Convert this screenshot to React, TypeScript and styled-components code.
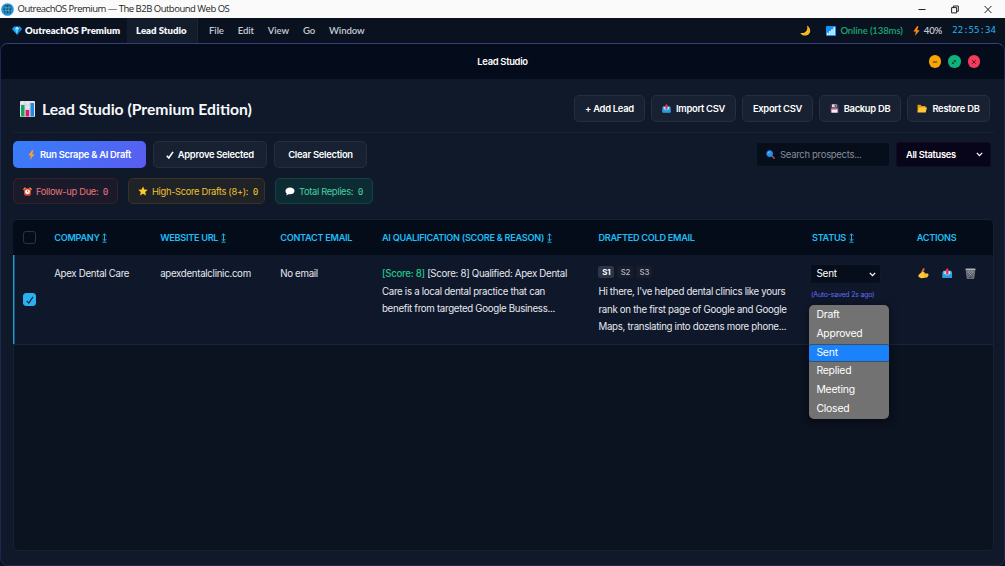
import React from "react";
import styled, { createGlobalStyle, css } from "styled-components";

const Global = createGlobalStyle`
  * { box-sizing: border-box; }
  html, body { margin: 0; padding: 0; background: #0b1220; }
  body {
    font-family: Inter, "Liberation Sans", sans-serif;
    letter-spacing: -0.3px;
    color: #e8edf5;
    overflow: hidden;
  }
  svg { display: block; flex: none; }
`;

const Screen = styled.div`
  width: 1005px;
  height: 566px;
  display: flex;
  flex-direction: column;
  background: #0a1220;
`;

const display = css`
  font-family: Lato, Inter, sans-serif;
`;

const Label = styled.span`
  white-space: nowrap;
`;

/* ---------- host title bar ---------- */
const HostBar = styled.header`
  height: 18px;
  flex: none;
  display: flex;
  align-items: center;
  background: #fafafa;
  color: #1c1c1c;
  padding: 0 13px 0 1px;
  font: 9.5px/18px "Open Sans", "Noto Sans", sans-serif;
  letter-spacing: -0.5px;
`;
const HostTitle = styled.span`
  margin-left: 3.5px;
  flex: 1;
`;
const HostControls = styled.div`
  display: flex;
  align-items: center;
  gap: 25px;
`;

/* ---------- menu bar ---------- */
const MenuBar = styled.nav`
  height: 25px;
  flex: none;
  display: flex;
  align-items: stretch;
  background: #0a1220;
  font-size: 9.6px;
  line-height: 25px;
  letter-spacing: 0;
  ${display}
`;
const Brand = styled.div`
  width: 127px;
  padding-left: 12px;
  display: flex;
  align-items: center;
  gap: 3px;
  font-weight: 800;
  color: #f4f7fb;
`;
const ActiveApp = styled.div`
  width: 71px;
  padding-left: 9px;
  background: #121c2b;
  border-right: 1px solid #1a2433;
  font-weight: 800;
  color: #f4f7fb;
`;
const MenuItems = styled.div`
  flex: 1;
  display: flex;
  padding-left: 11px;
  gap: 13.8px;
  font-weight: 600;
  letter-spacing: -0.08px;
  color: #c3cad6;
`;
const Tray = styled.div`
  display: flex;
  align-items: center;
  padding-right: 9px;
`;
const TrayItem = styled.div<{ $color: string; $gap: number }>`
  display: flex;
  align-items: center;
  gap: 4px;
  color: ${(p) => p.$color};
  margin-left: ${(p) => p.$gap}px;
  font-weight: 600;
  letter-spacing: -0.15px;
`;
const Clock = styled.div`
  margin-left: 10px;
  color: #25b3ec;
  font: 400 9.1px/25px "DejaVu Sans Mono", monospace;
`;

/* ---------- app window ---------- */
const Window = styled.main`
  flex: 1;
  min-height: 0;
  display: flex;
  flex-direction: column;
  border: 1px solid #1b2850;
  border-top-color: #353f7c;
  border-radius: 8px;
  background: #0f1929;
  overflow: hidden;
`;
const WindowBar = styled.div`
  height: 35px;
  flex: none;
  display: grid;
  grid-template-columns: 1fr auto 1fr;
  align-items: center;
  background: #040c1b;
  font-size: 9.4px;
  font-weight: 600;
  color: #fff;
`;
const WindowDots = styled.div`
  grid-column: 3;
  justify-self: end;
  display: flex;
  gap: 7px;
  padding-right: 24px;
`;
const Dot = styled.span<{ $c: string }>`
  width: 12.5px;
  height: 12.5px;
  border-radius: 50%;
  background: ${(p) => p.$c};
  display: grid;
  place-items: center;
`;
const Content = styled.div`
  flex: 1;
  min-height: 0;
  display: flex;
  flex-direction: column;
  padding: 16px 10px 14px 12px;
`;
const PageHead = styled.div`
  display: flex;
  height: 38px;
  align-items: flex-start;
  justify-content: space-between;
  border-bottom: 1px solid #172130;
  padding: 0 4px 0 7px;
`;
const PageTitle = styled.h1`
  margin: 0;
  display: flex;
  align-items: center;
  gap: 7px;
  height: 28px;
  font-size: 15.7px;
  line-height: 26px;
  letter-spacing: 0;
  font-weight: 700;
  color: #f6f8fb;
  ${display}
`;
const ButtonRow = styled.div<{ $gap?: number }>`
  display: flex;
  align-items: center;
  gap: ${(p) => p.$gap ?? 6}px;
`;
const Button = styled.button<{ $w: number; $primary?: boolean; $gap?: number }>`
  width: ${(p) => p.$w}px;
  height: 27px;
  padding: 0;
  display: flex;
  align-items: center;
  justify-content: center;
  gap: ${(p) => p.$gap ?? 5}px;
  border-radius: 5px;
  border: 1px solid ${(p) => (p.$primary ? "transparent" : "#232e3e")};
  background: ${(p) => (p.$primary ? "linear-gradient(135deg,#367ffa,#5a5cf0) border-box" : "#172131")};
  color: #fff;
  font: 600 9.4px/1 Inter, sans-serif;
  letter-spacing: -0.28px;
`;
const Toolbar = styled.div`
  display: flex;
  justify-content: space-between;
  align-items: center;
  margin-top: 8px;
  height: 27px;
  padding-right: 3px;
`;
const Search = styled.div`
  width: 134px;
  height: 25px;
  display: flex;
  align-items: center;
  gap: 5px;
  padding-left: 9px;
  border: 1px solid #101a28;
  border-radius: 3px;
  background: #060e1c;
  color: #868c96;
  font-size: 9.5px;
`;
const Filter = styled.div`
  width: 95px;
  height: 25px;
  display: flex;
  align-items: center;
  justify-content: space-between;
  padding: 0 7px 0 9px;
  border: 1px solid #0d0d20;
  border-radius: 3px;
  background: #080419;
  color: #fff;
  font-size: 9.3px;
  font-weight: 600;
`;
const Stats = styled.div`
  display: flex;
  gap: 10px;
  margin-top: 10px;
`;
const Stat = styled.div<{ $w: number; $fg: string; $bg: string; $bd: string }>`
  width: ${(p) => p.$w}px;
  height: 26px;
  display: flex;
  align-items: center;
  padding-left: 9px;
  gap: 4px;
  border: 1px solid ${(p) => p.$bd};
  border-radius: 5px;
  background: ${(p) => p.$bg};
  color: ${(p) => p.$fg};
  font-size: 9.35px;
  letter-spacing: -0.33px;
`;
const Count = styled.span`
  margin-left: 0.5px;
  font: 9.4px "DejaVu Sans Mono", monospace;
`;

/* ---------- table ---------- */
const Table = styled.section`
  flex: 1;
  min-height: 0;
  margin-top: 15px;
  display: flex;
  flex-direction: column;
  border: 1px solid #162030;
  border-radius: 5px;
  background: #0b1220;
`;
const columns = css`
  display: grid;
  grid-template-columns: 41.2px 106px 120px 101.8px 216.5px 213.5px 104.8px 1fr;
  margin-left: -1px;
`;
const HeadRow = styled.div`
  ${columns}
  height: 35px;
  align-items: center;
  background: #040c1a;
  border-radius: 5px 5px 0 0;
  color: #20bdf5;
  font-size: 9.15px;
  font-weight: 600;
  letter-spacing: -0.27px;
`;
const HeadCell = styled.div`
  display: flex;
  align-items: center;
  gap: 2.5px;
`;
const BodyRow = styled.div`
  ${columns}
  height: 90px;
  background: #0f172a;
  border-bottom: 1px solid #1a2236;
  box-shadow: inset 1.5px 0 #2397c9;
  font-size: 9.7px;
  line-height: 17.6px;
  color: #e6e9ef;
`;
const Cell = styled.div<{ $top?: number }>`
  padding-top: ${(p) => p.$top ?? 10}px;
  white-space: nowrap;
`;
const CheckCell = styled.div`
  display: flex;
  align-items: center;
  padding-left: 10px;
`;
const Check = styled.span<{ $on?: boolean }>`
  width: 13px;
  height: 13px;
  border-radius: 3px;
  border: 1px solid ${(p) => (p.$on ? "#29b0f2" : "#2a3343")};
  background: ${(p) => (p.$on ? "#29b0f2" : "transparent")};
  display: grid;
  place-items: center;
`;
const Score = styled.span`
  color: #21c688;
  font-weight: 500;
`;
const Steps = styled.div`
  display: flex;
  gap: 3px;
  height: 12px;
  margin-bottom: 5px;
`;
const Step = styled.span<{ $on?: boolean }>`
  width: 16px;
  border-radius: 2px;
  background: ${(p) => (p.$on ? "#2c3446" : "#171d2a")};
  color: ${(p) => (p.$on ? "#fff" : "#b9bec8")};
  font-size: 7.8px;
  font-weight: ${(p) => (p.$on ? 700 : 500)};
  line-height: 12px;
  letter-spacing: -0.1px;
  text-align: center;
`;
const StatusCell = styled.div`
  position: relative;
  padding-top: 9px;
`;
const StatusSelect = styled.div`
  width: 71px;
  height: 20px;
  margin-left: -2px;
  padding: 0 4px 0 5.5px;
  display: flex;
  align-items: center;
  justify-content: space-between;
  border: 1px solid #111a2b;
  border-radius: 3px;
  background: #060d1b;
  color: #fff;
  font-size: 10px;
`;
const Saved = styled.div`
  margin: 6px 0 0 -1px;
  font-size: 7px;
  line-height: 9px;
  letter-spacing: -0.22px;
  color: #656bf0;
`;
const Menu = styled.ul`
  position: absolute;
  z-index: 2;
  top: 50px;
  left: -3px;
  width: 80px;
  height: 114px;
  margin: 0;
  padding: 1.2px 0 0;
  list-style: none;
  border-radius: 5px;
  background: #727272;
  box-shadow: 0 2px 8px rgba(0, 0, 0, 0.5);
  overflow: hidden;
  font-size: 10.4px;
  letter-spacing: -0.2px;
`;
const Option = styled.li<{ $on?: boolean }>`
  height: 18.7px;
  line-height: 18.7px;
  padding-left: 7.4px;
  color: #fff;
  background: ${(p) => (p.$on ? "#1a82fb" : "transparent")};
  box-shadow: ${(p) => (p.$on ? "inset 0 -1px #3a5068, inset 0 1px #3a5068" : "none")};
  border-radius: 2px;
`;
const Actions = styled.div`
  display: flex;
  align-items: flex-start;
  gap: 13px;
  padding: 13px 0 0 1px;
`;

/* ---------- icons ---------- */
const Globe = () => (
  <svg width="13" height="13" viewBox="0 0 12 12">
    <circle cx="6" cy="6" r="5.800" fill="#2193df" />
    <path d="M4 1.800h4l1.700 2.700-.9 4.900H3.300L2.300 5z" fill="#12507e" />
    <path d="M4.600 2.400v7M7.300 2.400v7M3 4.400h6M3.200 7h5.600" stroke="#65cfc0" strokeWidth=".6" />
  </svg>
);
const Gem = () => (
  <svg width="10" height="9" viewBox="0 0 10 9">
    <path d="M2 .5h6L10 3 5 8.800 0 3z" fill="#1d9bf0" />
    <path d="M3 3h4L5 8.800z" fill="#4fd0ff" />
    <path d="M3 3 5 .5 7 3z" fill="#b5efff" />
    <path d="M7 3h3L5 8.800z" fill="#1170cf" />
  </svg>
);
const Moon = () => (
  <svg width="11" height="11" viewBox="0 0 11 11">
    <path d="M7 .5c5 3 4 10-2 10C2.600 10.500 1 9.300.4 7.900 5 9 8.500 5.500 7 .5z" fill="#fcc21b" />
    <path d="M8.500 2.500c1.500 4-1 7.400-6 7" stroke="#e89d12" strokeWidth=".7" fill="none" />
  </svg>
);
const Signal = () => (
  <svg width="10" height="10" viewBox="0 0 10 10">
    <rect width="10" height="10" rx="1" fill="#1594f2" />
    <path d="M1 6.800h1.600V9H1zM3.100 5h1.600v4H3.100zM5.200 3.300h1.600V9H5.200zM7.300 1.300h1.600V9H7.300z" fill="#e6f6ff" />
  </svg>
);
const Bolt = ({ c = "#ff8a1c" }: { c?: string }) => (
  <svg width="7" height="10" viewBox="0.500 0 7 10">
    <path d="M4.500.2.9 5.500h2.500L2.500 9.800 7.200 4.200H4.600L6 .2z" fill={c} />
  </svg>
);
const Chart = () => (
  <svg width="15" height="16" viewBox="0 0 15 16">
    <rect width="15" height="16" rx="1" fill="#e9e3ee" />
    <path d="M0 4h15M0 8h15M5 0v16M10 0v16" stroke="#b6bfca" strokeWidth=".5" />
    <rect x="1" y="4" width="3.500" height="11.500" fill="#13a463" />
    <rect x="5.600" y="9" width="3.700" height="6.500" fill="#e5175f" />
    <rect x="10.500" y="2" width="3.500" height="13.500" fill="#1e88e5" />
  </svg>
);
const Outbox = ({ s = 9 }: { s?: number }) => (
  <svg width={s} height={s} viewBox="0 0 10 10">
    <path d="M1.300 2.500h7.400l.8 1.800v4.400a.8.800 0 0 1-.8.800H1.300a.8.800 0 0 1-.8-.8V4.300z" fill="#3fb0ee" />
    <path d="M2.200 3.200h5.600v3H2.200z" fill="#b9dff5" />
    <path d="M.5 6h2.600l.8 1.300h2.200L6.900 6h2.600v3.500h-9z" fill="#2c9ce0" />
    <path d="M5 0 7.200 2.600H6.100v3.300H3.900V2.600H2.800z" fill="#e8304f" />
  </svg>
);
const Floppy = () => (
  <svg width="9" height="9" viewBox="0 0 9 9">
    <path d="M.3.300h7.700l.8.900v7.500H.3z" fill="#4b3155" />
    <rect x="2" y=".3" width="4.500" height="3" fill="#d9dee6" />
    <rect x="4.600" y=".7" width="1.200" height="2.100" fill="#4b3155" />
    <rect x="1.400" y="4.600" width="6.200" height="4.100" fill="#f3f3f7" />
    <path d="M1.400 5h6.200" stroke="#e2416d" />
  </svg>
);
const Folder = () => (
  <svg width="10" height="9" viewBox="0 0 10 9">
    <path d="M.5.800h3l1 1.200h4v6h-8z" fill="#e79a10" />
    <path d="M2 3.400h8L8.600 8.500H.5z" fill="#ffca3a" />
  </svg>
);
const Magnifier = () => (
  <svg width="9" height="9" viewBox="0 0 9 9">
    <path d="m5.800 5.800 2.400 2.400" stroke="#a0526b" strokeWidth="1.500" strokeLinecap="round" />
    <circle cx="3.700" cy="3.700" r="3.100" fill="#2196f3" stroke="#2c6fc0" strokeWidth=".7" />
    <path d="M2 3.200C2.300 2.200 3 1.900 3.900 1.900" stroke="#9bdcff" strokeWidth=".8" fill="none" />
  </svg>
);
const Chevron = () => (
  <svg width="7" height="5" viewBox="0 0 7 5">
    <path d="m.8.900 2.700 2.700L6.200.900" stroke="#fff" strokeWidth="1.300" fill="none" />
  </svg>
);
const Tick = ({ c = "#fff", w = 1.3 }: { c?: string; w?: number }) => (
  <svg width="8" height="8" viewBox="0 0 8 8">
    <path d="M.8 4.800 2.800 7 7 .9" stroke={c} strokeWidth={w} fill="none" />
  </svg>
);
const Alarm = () => (
  <svg width="9" height="9" viewBox="0 0 9 9">
    <path d="M0 2.200 2 .2l1 1L1 3.300zM9 2.200l-2-2-1 1 2 2.100z" fill="#f6b32b" />
    <rect x="1" y="1.300" width="7" height="7.400" rx="2" fill="#e5402f" />
    <circle cx="4.500" cy="4.800" r="2.400" fill="#fff" />
    <path d="M4.500 3.300v1.600h1" stroke="#444" strokeWidth=".6" fill="none" />
  </svg>
);
const Star = () => (
  <svg width="10" height="10" viewBox="0 0 10 10">
    <path d="m5 .4 1.400 3 3.300.4-2.400 2.300.6 3.300L5 7.800 2.100 9.400l.6-3.300L.3 3.800l3.300-.4z" fill="#ffc928" />
  </svg>
);
const Bubble = () => (
  <svg width="10" height="9" viewBox="0 0 10 9">
    <path d="M5 .6c2.600 0 4.500 1.400 4.500 3.400S7.600 7.300 5 7.300c-.6 0-1 0-1.500-.1L1.300 8.400l.5-1.900C.9 5.900.5 5 .5 4 .5 2 2.400.6 5 .6z" fill="#fff" />
  </svg>
);
const Sort = () => (
  <svg width="5" height="10" viewBox="0 0 5 10">
    <path d="M2.500.9v7M.6 2.700 2.500.8l1.900 1.900M.6 6l1.900 1.900L4.400 6M.5 9.200h4" stroke="currentColor" strokeWidth=".9" fill="none" />
  </svg>
);
const Hand = () => (
  <svg width="11" height="11" viewBox="0 0 12 12">
    <path d="M.8 8.200 5 4l1.800 1-2.800 4z" fill="#f9b428" />
    <path d="M6.200 1.200 3.600 6.400" stroke="#e8743a" strokeWidth="2" strokeLinecap="round" />
    <path d="M1.200 6.800 5.600 4.200l2 .9-.6 1 3.500-.1q1.400.5.8 1.600.4 1-.5 1.500 0 1.200-1.300 1.300L3.600 11.200Q1.600 10.700.2 9z" fill="#ffc83a" />
    <path d="M7 8h3.500M7 9.500h3" stroke="#e79a1c" strokeWidth=".5" />
  </svg>
);
const Bin = () => (
  <svg width="11" height="11" viewBox="0 0 11 11">
    <path d="M1 1.500h9l-1.200 9H2.200z" fill="#4a4e56" />
    <path d="M1.300 2 8.500 10M3.500 2l5.700 6M6 2l3.600 4M9.700 2 2.500 10M7.500 2 1.800 8M5 2 1.400 6" stroke="#b2b5ba" strokeWidth=".6" />
    <path d="M1 1.500h9l-1.200 9H2.200z" fill="none" stroke="#8b8f96" strokeWidth=".6" />
    <rect x=".5" y=".6" width="10" height="1.300" rx=".6" fill="#b0b3b8" />
  </svg>
);

const menuItems = ["File", "Edit", "View", "Go", "Window"];
const statuses = ["Draft", "Approved", "Sent", "Replied", "Meeting", "Closed"];

export default function App() {
  return (
    <Screen>
      <Global />
      <HostBar>
        <Globe />
        <HostTitle>OutreachOS Premium — The B2B Outbound Web OS</HostTitle>
        <HostControls>
          <svg width="8" height="9" viewBox="0 0 8 9"><path d="M.5 4.500h7" stroke="#222" /></svg>
          <svg width="8" height="9" viewBox="0 0 8 9">
            <path d="M.6 2.600h5v5.300h-5zM2.300 2.500V1h5v5.300H5.800" stroke="#222" fill="none" />
          </svg>
          <svg width="8" height="9" viewBox="0 0 8 9"><path d="m.6 1 6.800 7M7.400 1 .6 8" stroke="#222" /></svg>
        </HostControls>
      </HostBar>

      <MenuBar>
        <Brand><Gem /><Label>OutreachOS Premium</Label></Brand>
        <ActiveApp><Label>Lead Studio</Label></ActiveApp>
        <MenuItems>{menuItems.map((m) => <Label key={m}>{m}</Label>)}</MenuItems>
        <Tray>
          <Moon />
          <TrayItem $color="#1aa673" $gap={15}><Signal /><Label>Online (138ms)</Label></TrayItem>
          <TrayItem $color="#c3cad6" $gap={10}><Bolt /><Label>40%</Label></TrayItem>
          <Clock>22:55:34</Clock>
        </Tray>
      </MenuBar>

      <Window>
        <WindowBar>
          <span />
          <Label>Lead Studio</Label>
          <WindowDots>
            <Dot $c="#faa307"><svg width="6" height="6" viewBox="0 0 6 6"><path d="M.8 3h4.400" stroke="#4a3000" /></svg></Dot>
            <Dot $c="#10b27c"><svg width="6" height="6" viewBox="0 0 6 6"><path d="M1.300 4.700 4.700 1.300M2.800 1.500h1.700v1.700M1.500 2.800v1.700h1.700" stroke="#053d2a" strokeWidth=".7" fill="none" /></svg></Dot>
            <Dot $c="#f43b5c"><svg width="6" height="6" viewBox="0 0 6 6"><path d="m1.200 1.200 3.600 3.600M4.800 1.200 1.200 4.800" stroke="#5a0c1c" strokeWidth=".9" /></svg></Dot>
          </WindowDots>
        </WindowBar>

        <Content>
          <PageHead>
            <PageTitle><Chart /><Label>Lead Studio (Premium Edition)</Label></PageTitle>
            <ButtonRow>
              <Button $w={71}><Label>+ Add Lead</Label></Button>
              <Button $w={85}><Outbox /><Label>Import CSV</Label></Button>
              <Button $w={71}><Label>Export CSV</Label></Button>
              <Button $w={82}><Floppy /><Label>Backup DB</Label></Button>
              <Button $w={83}><Folder /><Label>Restore DB</Label></Button>
            </ButtonRow>
          </PageHead>

          <Toolbar>
            <ButtonRow $gap={7}>
              <Button $w={133} $primary><Bolt c="#ff9f2e" /><Label>Run Scrape &amp; AI Draft</Label></Button>
              <Button $w={114} $gap={3.5}><Tick w={1.6} /><Label>Approve Selected</Label></Button>
              <Button $w={93}><Label>Clear Selection</Label></Button>
            </ButtonRow>
            <ButtonRow>
              <Search><Magnifier /><Label>Search prospects...</Label></Search>
              <Filter><Label>All Statuses</Label><Chevron /></Filter>
            </ButtonRow>
          </Toolbar>

          <Stats>
            <Stat $w={105} $fg="#e9757c" $bg="#1b1a2a" $bd="#36202f"><Alarm /><Label>Follow-up Due:</Label><Count>0</Count></Stat>
            <Stat $w={137} $fg="#efc32c" $bg="#1f2226" $bd="#383324"><Star /><Label>High-Score Drafts (8+):</Label><Count>0</Count></Stat>
            <Stat $w={98} $fg="#48cfa2" $bg="#0c2b33" $bd="#114440"><Bubble /><Label>Total Replies:</Label><Count>0</Count></Stat>
          </Stats>

          <Table>
            <HeadRow>
              <CheckCell><Check /></CheckCell>
              <HeadCell><Label>COMPANY</Label><Sort /></HeadCell>
              <HeadCell><Label>WEBSITE URL</Label><Sort /></HeadCell>
              <HeadCell><Label>CONTACT EMAIL</Label></HeadCell>
              <HeadCell><Label>AI QUALIFICATION (SCORE &amp; REASON)</Label><Sort /></HeadCell>
              <HeadCell><Label>DRAFTED COLD EMAIL</Label></HeadCell>
              <HeadCell><Label>STATUS</Label><Sort /></HeadCell>
              <HeadCell><Label>ACTIONS</Label></HeadCell>
            </HeadRow>
            <BodyRow>
              <CheckCell><Check $on><Tick c="#0b1c30" w={1.1} /></Check></CheckCell>
              <Cell>Apex Dental Care</Cell>
              <Cell>apexdentalclinic.com</Cell>
              <Cell>No email</Cell>
              <Cell>
                <div><Score>[Score: 8]</Score> [Score: 8] Qualified: Apex Dental</div>
                <div>Care is a local dental practice that can</div>
                <div>benefit from targeted Google Business...</div>
              </Cell>
              <Cell $top={11}>
                <Steps><Step $on>S1</Step><Step>S2</Step><Step>S3</Step></Steps>
                <div>Hi there, I've helped dental clinics like yours</div>
                <div>rank on the first page of Google and Google</div>
                <div>Maps, translating into dozens more phone...</div>
              </Cell>
              <StatusCell>
                <StatusSelect><Label>Sent</Label><Chevron /></StatusSelect>
                <Saved><Label>(Auto-saved 2s ago)</Label></Saved>
                <Menu>
                  {statuses.map((s) => <Option key={s} $on={s === "Sent"}>{s}</Option>)}
                </Menu>
              </StatusCell>
              <Actions><Hand /><Outbox s={10.5} /><Bin /></Actions>
            </BodyRow>
          </Table>
        </Content>
      </Window>
    </Screen>
  );
}
